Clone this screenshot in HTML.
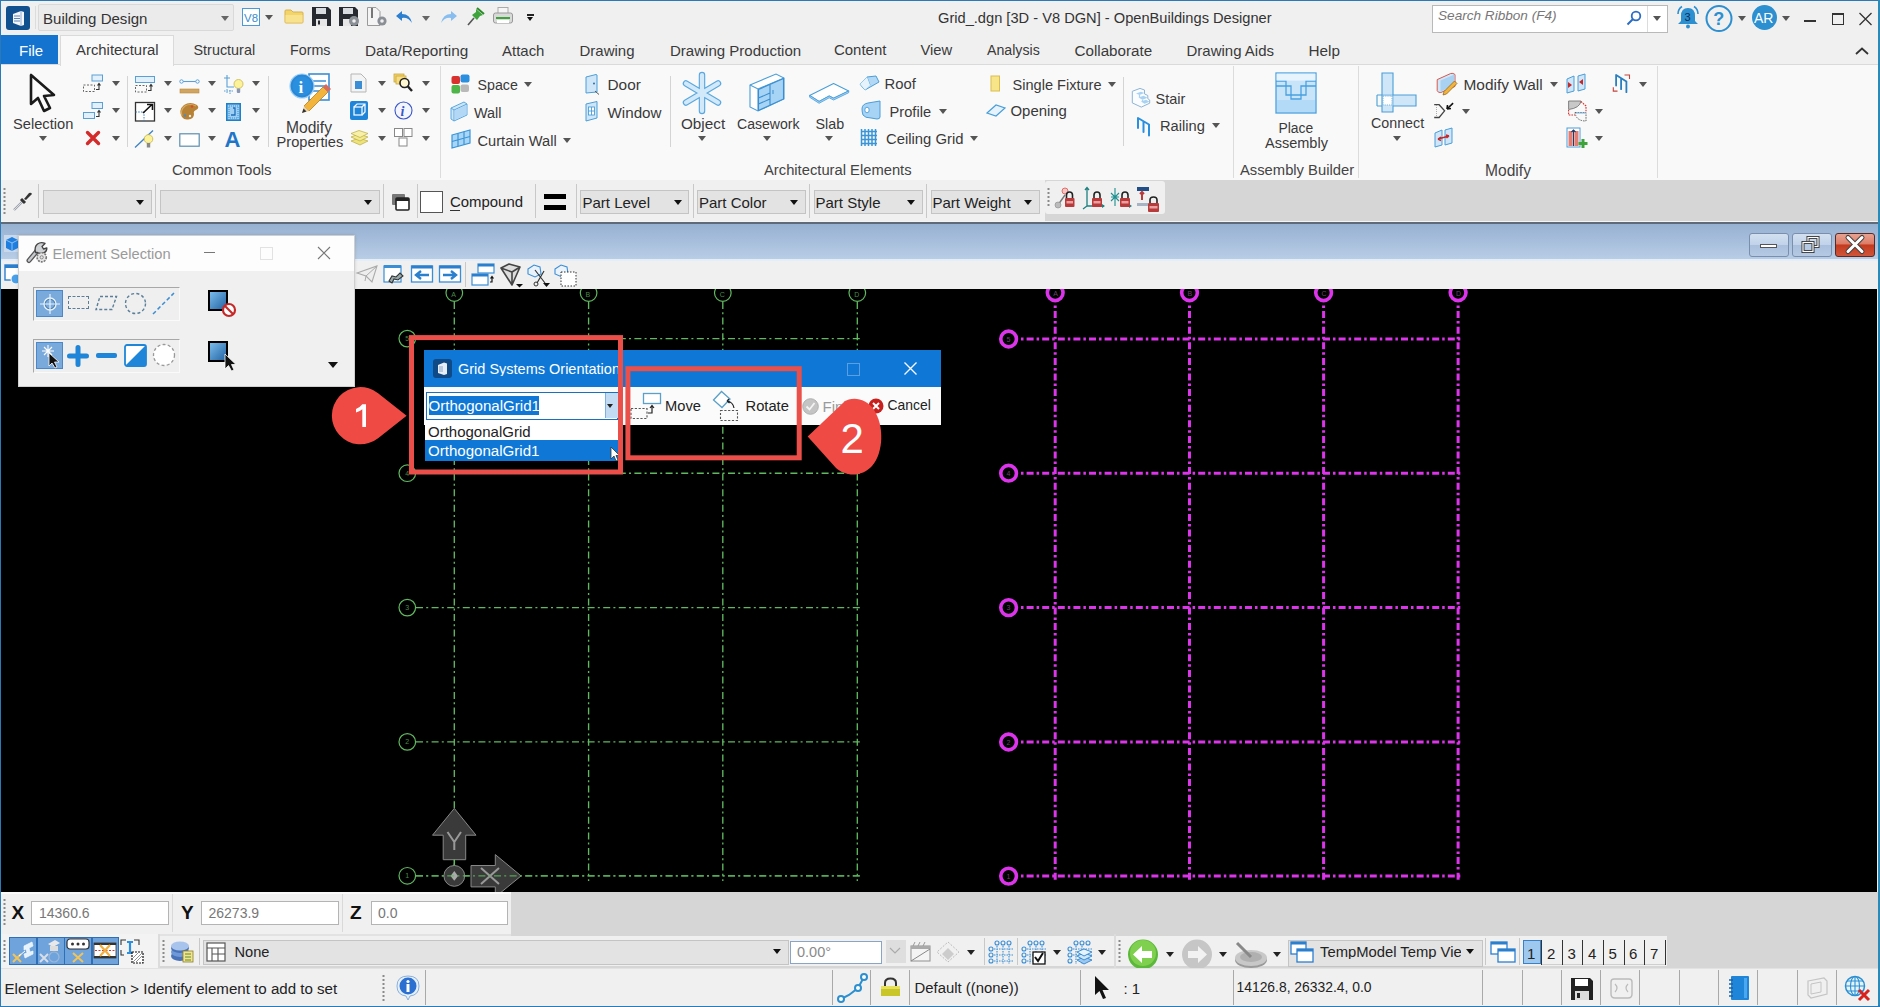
<!DOCTYPE html>
<html><head><meta charset="utf-8">
<style>
html,body{margin:0;padding:0;}
body{width:1880px;height:1007px;overflow:hidden;position:relative;background:#f0f0f0;font-family:"Liberation Sans",sans-serif;color:#333;}
.a{position:absolute;}
.t{position:absolute;white-space:nowrap;line-height:1;font-size:15px;color:#3a3a3a;}
.sep{position:absolute;width:1px;background:#d4d4d4;}
.arr{position:absolute;width:0;height:0;border-left:4px solid transparent;border-right:4px solid transparent;border-top:5px solid #555;}
.arrb{position:absolute;width:0;height:0;border-left:5px solid transparent;border-right:5px solid transparent;border-top:6px solid #111;}
svg{position:absolute;overflow:visible;}
</style></head>
<body>
<!-- window border -->
<div class="a" style="left:0;top:0;width:1880px;height:1px;background:#2b7ab8"></div>
<div class="a" style="left:0;top:0;width:1px;height:1007px;background:#2b7ab8"></div>
<div class="a" style="left:1878px;top:0;width:2px;height:1007px;background:#2b8ab8"></div>
<div class="a" style="left:0;top:1005px;width:1880px;height:2px;background:#2b7ab8"></div>

<!-- TITLE BAR -->
<div class="a" style="left:1px;top:1px;width:1877px;height:34px;background:#f0f0f0"></div>
<!-- app icon -->
<svg style="left:6px;top:6px" width="24" height="24" viewBox="0 0 24 24"><rect x="0" y="0" width="24" height="24" rx="3" fill="#11508f"/><path d="M7 8 L15 5 L18 6 L18 19 L15 20 L7 17 Z" fill="#f4f6fa"/><path d="M8 10h6M8 12.5h6M8 15h6" stroke="#5c86b6" stroke-width="1.2"/><path d="M15 5 L15 20" stroke="#8eaad0" stroke-width="1"/></svg>
<div class="a" style="left:35px;top:6px;width:1px;height:23px;background:#dcdcdc"></div>
<!-- combo -->
<div class="a" style="left:38px;top:4px;width:194px;height:25px;background:#ebebeb;border:1px solid #d9d9d9;border-radius:2px"></div>
<div class="t" style="left:43px;top:11px;color:#333;font-size:15.04px">Building Design</div>
<div class="arr" style="left:221px;top:16px;border-top-color:#666"></div>
<!-- v8 -->
<svg style="left:242px;top:8px" width="18" height="18" viewBox="0 0 18 18"><rect x="0.5" y="0.5" width="17" height="17" fill="#fff" stroke="#4a9ad8"/><text x="2" y="13.5" font-family="Liberation Sans" font-size="11.5" fill="#3b8bd0" textLength="14" lengthAdjust="spacingAndGlyphs">V8</text></svg>
<div class="arr" style="left:265px;top:15px"></div>
<!-- folder -->
<svg style="left:284px;top:9px" width="20" height="15" viewBox="0 0 20 15"><path d="M1 2 Q1 1 2 1 L7 1 L9 3 L18 3 Q19 3 19 4 L19 13 Q19 14 18 14 L2 14 Q1 14 1 13 Z" fill="#f3d46b" stroke="#d8b24a"/><rect x="1.5" y="6" width="17" height="7.5" fill="#f9e28e"/></svg>
<!-- save -->
<svg style="left:312px;top:7px" width="19" height="19" viewBox="0 0 19 19"><path d="M0 0 H16 L19 3 V19 H0 Z" fill="#262a30"/><rect x="4" y="1" width="10" height="6" fill="#d8dbe0"/><rect x="4" y="12" width="11" height="7" fill="#e6e6e6"/><rect x="6" y="13.5" width="2" height="4" fill="#262a30"/></svg>
<!-- save as -->
<svg style="left:339px;top:7px" width="21" height="19" viewBox="0 0 21 19"><path d="M0 0 H16 L19 3 V19 H0 Z" fill="#262a30"/><rect x="4" y="1" width="10" height="6" fill="#d8dbe0"/><rect x="4" y="12" width="8" height="7" fill="#e6e6e6"/><circle cx="15" cy="14" r="5" fill="#8a8f96"/><circle cx="15" cy="14" r="1.8" fill="#eee"/></svg>
<!-- doc gear -->
<svg style="left:367px;top:7px" width="20" height="19" viewBox="0 0 20 19"><path d="M0.5 0.5 H9 L13 4.5 V18.5 H0.5 Z" fill="#f4f4f4" stroke="#9a9a9a"/><rect x="4" y="1" width="2" height="10" fill="#777"/><circle cx="15" cy="14" r="4.6" fill="#8a8f96"/><circle cx="15" cy="14" r="1.8" fill="#eee"/></svg>
<!-- undo -->
<svg style="left:396px;top:11px" width="17" height="13" viewBox="0 0 17 13"><path d="M6 0 L0 5 L6 10 L6 7 Q12 6 16 12 Q14 3 6 3 Z" fill="#2c7fd1"/></svg>
<div class="arr" style="left:422px;top:16px;border-top-color:#666"></div>
<!-- redo -->
<svg style="left:440px;top:11px" width="17" height="13" viewBox="0 0 17 13"><path d="M11 0 L17 5 L11 10 L11 7 Q5 6 1 12 Q3 3 11 3 Z" fill="#88bdf0"/></svg>
<!-- pin -->
<svg style="left:467px;top:7px" width="18" height="19" viewBox="0 0 18 19"><path d="M9 2 L16 8 L13 9 L10 13 L5 8 L9 5 Z" fill="#3ea33a"/><path d="M10 1 L17 7" stroke="#2d8a2a" stroke-width="2"/><path d="M7 11 L1 18" stroke="#555" stroke-width="1.6"/></svg>
<!-- print -->
<svg style="left:493px;top:7px" width="20" height="18" viewBox="0 0 20 18"><rect x="5" y="0.5" width="10" height="7" fill="#f5f5f5" stroke="#aaa"/><rect x="0.5" y="6" width="19" height="10" rx="2" fill="#d9d9d9" stroke="#999"/><rect x="3" y="10" width="14" height="2" fill="#3ea33a"/><rect x="4" y="13" width="12" height="3" fill="#fff"/></svg>
<!-- customize -->
<div class="a" style="left:527px;top:14px;width:7px;height:1.5px;background:#222"></div>
<div class="arrb" style="left:527px;top:17px;border-left-width:3.5px;border-right-width:3.5px;border-top-width:4px"></div>
<!-- title -->
<div class="t" style="left:938px;top:11px;color:#333;font-size:14.65px">Grid_.dgn [3D - V8 DGN] - OpenBuildings Designer</div>
<!-- search -->
<div class="a" style="left:1432px;top:5px;width:234px;height:26px;background:#fff;border:1px solid #b9b9b9"></div>
<div class="a" style="left:1647px;top:6px;width:1px;height:26px;background:#dcdcdc"></div>
<div class="t" style="left:1438px;top:9px;font-style:italic;color:#777;font-size:13.6px">Search Ribbon (F4)</div>
<svg style="left:1626px;top:10px" width="16" height="16" viewBox="0 0 16 16"><circle cx="10" cy="6" r="4.3" fill="none" stroke="#2b6cc4" stroke-width="1.8"/><path d="M7 9 L1.5 14.5" stroke="#2b6cc4" stroke-width="2"/></svg>
<div class="arr" style="left:1653px;top:16px;border-top-color:#555"></div>
<!-- bell -->
<svg style="left:1675px;top:5px" width="26" height="24" viewBox="0 0 26 24"><path d="M13 3 Q6 3 6 11 L6 16 L3 19 L23 19 L20 16 L20 11 Q20 3 13 3 Z" fill="#2b8fd0"/><circle cx="13" cy="21.5" r="2" fill="#2b8fd0"/><path d="M3 9 Q3 4 7 1.5 M23 9 Q23 4 19 1.5" stroke="#2b8fd0" stroke-width="1.6" fill="none"/><text x="9.5" y="16" font-family="Liberation Sans" font-size="11" fill="#0c2d55">3</text></svg>
<!-- help -->
<svg style="left:1705px;top:5px" width="28" height="27" viewBox="0 0 28 27"><circle cx="14" cy="13.5" r="12.5" fill="none" stroke="#2b8fd0" stroke-width="2"/><text x="8.3" y="20" font-family="Liberation Sans" font-weight="bold" font-size="18" fill="#2b8fd0">?</text></svg>
<div class="arr" style="left:1738px;top:16px;border-top-color:#555"></div>
<!-- AR -->
<div class="a" style="left:1752px;top:5px;width:25px;height:25px;border-radius:50%;background:#2b8fd0"></div>
<div class="t" style="left:1754px;top:11px;color:#fff;font-size:14px">AR</div>
<div class="arr" style="left:1782px;top:16px;border-top-color:#555"></div>
<!-- window controls -->
<div class="a" style="left:1804px;top:20px;width:12px;height:2px;background:#333"></div>
<div class="a" style="left:1832px;top:13px;width:10px;height:9px;border:1px solid #333;border-top-width:2px"></div>
<svg style="left:1859px;top:13px" width="13" height="12" viewBox="0 0 13 12"><path d="M0.5 0 L12.5 12 M12.5 0 L0.5 12" stroke="#333" stroke-width="1.3"/></svg>


<!-- TABS -->
<div class="a" style="left:1px;top:35px;width:57px;height:29px;background:#1473cf"></div>
<div class="t" style="left:19px;top:43px;color:#fff;font-size:15px">File</div>
<div class="a" style="left:60px;top:35px;width:112px;height:30px;background:#f9f9f9;border:1px solid #dadada;border-bottom:none;z-index:2"></div>
<div class="t" style="left:76px;top:43px;z-index:3;font-size:14.88px">Architectural</div>
<div class="t" style="left:193.5px;top:43px;font-size:14.4px">Structural</div>
<div class="t" style="left:290px;top:43px;font-size:14.26px">Forms</div>
<div class="t" style="left:365px;top:43px;font-size:15.35px">Data/Reporting</div>
<div class="t" style="left:502px;top:43px;font-size:14.98px">Attach</div>
<div class="t" style="left:579.5px;top:43px">Drawing</div>
<div class="t" style="left:670px;top:43px;font-size:15.04px">Drawing Production</div>
<div class="t" style="left:834px;top:43px;font-size:14.96px">Content</div>
<div class="t" style="left:920.5px;top:43px;font-size:14.78px">View</div>
<div class="t" style="left:987px;top:43px;font-size:14.18px">Analysis</div>
<div class="t" style="left:1074.5px;top:43px;font-size:15.19px">Collaborate</div>
<div class="t" style="left:1186.5px;top:43px">Drawing Aids</div>
<div class="t" style="left:1308.5px;top:43px;font-size:15.31px">Help</div>
<svg style="left:1855px;top:47px" width="14" height="8" viewBox="0 0 14 8"><path d="M1 7 L7 1.5 L13 7" stroke="#333" stroke-width="1.8" fill="none"/></svg>


<!-- RIBBON -->
<div class="a" style="left:1px;top:64px;width:1877px;height:115px;background:#f9f9f9;border-top:1px solid #dadada;border-bottom:1px solid #dadada"></div>
<!-- ===== Common Tools ===== -->
<svg style="left:29px;top:73px" width="28" height="40" viewBox="0 0 28 40"><path d="M2 2 L2 31 L9 25 L15 38 L21 35 L15 23 L25 22 Z" fill="#fafafa" stroke="#1a1a1a" stroke-width="2.6" stroke-linejoin="round"/></svg>
<div class="t" style="left:13px;top:117.0px;font-size:14.66px">Selection</div>
<div class="arr" style="left:39px;top:136px"></div>
<!-- col A -->
<svg style="left:82px;top:74px" width="22" height="19" viewBox="0 0 22 19"><rect x="10" y="1" width="10.5" height="6" fill="#e2f0fb" stroke="#5aa0d6"/><rect x="1.5" y="11" width="11" height="6.5" fill="none" stroke="#666" stroke-dasharray="2 1.5"/><path d="M14 15.5 H17 V10 M15.5 11.5 L17 9.5 L18.5 11.5" stroke="#333" fill="none" stroke-width="1.1"/></svg>
<svg style="left:82px;top:101px" width="22" height="19" viewBox="0 0 22 19"><rect x="10" y="1.5" width="10.5" height="6" fill="#e2f0fb" stroke="#5aa0d6"/><rect x="1.5" y="11.5" width="11" height="6" fill="#e2f0fb" stroke="#5aa0d6"/><path d="M14 15.5 H17 V10 M15.5 11.5 L17 9.5 L18.5 11.5" stroke="#333" fill="none" stroke-width="1.1"/></svg>
<svg style="left:85px;top:130px" width="16" height="16" viewBox="0 0 16 16"><path d="M2.5 2.5 L13.5 13.5 M13.5 2.5 L2.5 13.5" stroke="#d42a2a" stroke-width="3.4" stroke-linecap="round"/></svg>
<div class="arr" style="left:111.5px;top:81px"></div>
<div class="arr" style="left:111.5px;top:108px"></div>
<div class="arr" style="left:111.5px;top:136px"></div>
<div class="sep" style="left:127px;top:76px;height:71px"></div>
<!-- col B -->
<svg style="left:134px;top:75px" width="22" height="19" viewBox="0 0 22 19"><rect x="1.5" y="1.5" width="19" height="6" fill="#e2f0fb" stroke="#5aa0d6"/><rect x="1.5" y="10.5" width="11" height="6.5" fill="none" stroke="#666" stroke-dasharray="2 1.5"/><path d="M14 15.5 H17 V10 M15.5 11.5 L17 9.5 L18.5 11.5" stroke="#333" fill="none" stroke-width="1.1"/></svg>
<svg style="left:134px;top:101px" width="22" height="21" viewBox="0 0 22 21"><rect x="1.5" y="1.5" width="19" height="18.5" fill="#fff" stroke="#333" stroke-width="1.3"/><path d="M1.5 11 H10 V20" stroke="#3b82c4" stroke-dasharray="1.5 1.2" fill="none"/><path d="M9 12 L18 3.5 M13 3.5 H18.5 V9" stroke="#111" stroke-width="1.6" fill="none"/></svg>
<svg style="left:134px;top:129px" width="22" height="20" viewBox="0 0 22 20"><path d="M1 18.5 L19 1.5" stroke="#3b82c4" stroke-width="1.3"/><circle cx="14.5" cy="10" r="4.3" fill="#fbf29a" stroke="#c9b54a" stroke-width="0.8"/><rect x="12.8" y="14" width="3.4" height="4.5" fill="#888"/></svg>
<div class="arr" style="left:163.5px;top:81px"></div>
<div class="arr" style="left:163.5px;top:108px"></div>
<div class="arr" style="left:163.5px;top:136px"></div>
<!-- col C -->
<svg style="left:179px;top:76px" width="21" height="18" viewBox="0 0 21 18"><path d="M2.5 5.5 H18.5" stroke="#5aa0d6" stroke-width="1.1"/><circle cx="2.5" cy="5.5" r="1.7" fill="#fff" stroke="#5aa0d6"/><circle cx="18.5" cy="5.5" r="1.7" fill="#fff" stroke="#5aa0d6"/><rect x="1" y="13" width="19" height="4" fill="#d2a55e" stroke="#b8883f" stroke-width="0.6"/></svg>
<svg style="left:179px;top:102px" width="21" height="19" viewBox="0 0 21 19"><path d="M3 15 Q-1 8 5 3 Q11 -1 18 3 Q21 6 17 8 Q14 9 15 12 Q15 17 9 17.5 Q5 18 3 15 Z" fill="#b78235"/><path d="M3 14 Q1 8 6 4 Q11 1 17 4" stroke="#d9a95c" stroke-width="1.2" fill="none"/><circle cx="13" cy="4.5" r="1.2" fill="#e04a2a"/><circle cx="11" cy="14" r="1.2" fill="#eee"/><circle cx="6" cy="13.5" r="1.2" fill="#4b8bc0"/></svg>
<svg style="left:179px;top:133px" width="21" height="14" viewBox="0 0 21 14"><rect x="0.8" y="0.8" width="19.4" height="12.4" fill="#fff" stroke="#5b8eaf" stroke-width="1.2"/></svg>
<div class="arr" style="left:207.5px;top:81px"></div>
<div class="arr" style="left:207.5px;top:108px"></div>
<div class="arr" style="left:207.5px;top:136px"></div>
<!-- col D -->
<svg style="left:223px;top:74px" width="21" height="21" viewBox="0 0 21 21"><path d="M4 1 V13 H11 M1 4 H7" stroke="#5aa0d6" stroke-width="1.1" fill="none"/><path d="M4 15 V20 M7 16 V20 M1 17 H11" stroke="#5aa0d6" stroke-width="1" stroke-dasharray="1.5 1" fill="none"/><circle cx="15.5" cy="10" r="4.5" fill="#fbf29a" stroke="#c9b54a" stroke-width="0.8"/><rect x="13.8" y="14.5" width="3.4" height="4.5" rx="1" fill="#8a96b8"/></svg>
<svg style="left:226px;top:103px" width="15" height="18" viewBox="0 0 15 18"><rect x="0.8" y="0.8" width="13.4" height="16.4" fill="#9fd0f4" stroke="#1f7fc9" stroke-width="1.6"/><rect x="3" y="3" width="9" height="12" fill="none" stroke="#3a8fd3" stroke-dasharray="1 1"/><path d="M5 12 H9 V5 H7" stroke="#1f6fb9" stroke-width="1.3" fill="none"/></svg>
<div class="t" style="left:224.5px;top:129px;font-size:22px;font-weight:bold;color:#1f76c8">A</div>
<div class="arr" style="left:251.5px;top:81px"></div>
<div class="arr" style="left:251.5px;top:108px"></div>
<div class="arr" style="left:251.5px;top:136px"></div>
<div class="sep" style="left:268px;top:76px;height:71px"></div>
<!-- Modify properties -->
<svg style="left:289px;top:72px" width="42" height="42" viewBox="0 0 42 42"><rect x="20" y="2" width="20" height="26" fill="#fff" stroke="#3a8ed6" stroke-width="1.6"/><path d="M24 9 H37 M24 14 H37 M24 19 H37" stroke="#3a8ed6" stroke-width="1.5"/><circle cx="13" cy="14" r="12" fill="#2a87d6" stroke="#9ccff5" stroke-width="1.2"/><circle cx="13" cy="14" r="9.5" fill="#2b8fe0"/><text x="9.5" y="21" font-family="Liberation Serif" font-weight="bold" font-size="17" fill="#fff">i</text><path d="M15 34 L34 15 L39 20 L20 39 Z" fill="#f2b43a" stroke="#b77d1d" stroke-width="0.8"/><path d="M15 34 L13 41 L20 39 Z" fill="#e9d4a8"/><path d="M13 41 L14.5 36.5 L17.5 39.5 Z" fill="#333"/><path d="M34 15 L37 12 L42 17 L39 20 Z" fill="#d96b5d"/></svg>
<div class="t" style="left:286px;top:119.5px;font-size:15.6px">Modify</div>
<div class="t" style="left:276.5px;top:135px;font-size:14.66px">Properties</div>
<svg style="left:350px;top:73px" width="18" height="20" viewBox="0 0 18 20"><path d="M1 1 H11 L16 6 V19 H1 Z" fill="#f4f4f4" stroke="#b5b5b5"/><rect x="5" y="8" width="7" height="8" fill="#3a8ed6"/></svg>
<svg style="left:350px;top:101px" width="18" height="19" viewBox="0 0 18 19"><rect x="0" y="0" width="18" height="19" rx="2" fill="#1f85d8"/><rect x="4" y="6" width="8" height="8" fill="none" stroke="#fff" stroke-width="1.2"/><path d="M4 6 L7 3 H15 V11 L12 14 M12 6 L15 3" stroke="#fff" fill="none" stroke-width="1.2"/></svg>
<svg style="left:350px;top:130px" width="19" height="16" viewBox="0 0 19 16"><path d="M1 11 L9 8 L18 11 L10 15 Z" fill="#eee27a" stroke="#b9ab3c" stroke-width="0.7"/><path d="M1 7 L9 4 L18 7 L10 11 Z" fill="#f3e98e" stroke="#b9ab3c" stroke-width="0.7"/><path d="M1 3.5 L9 0.5 L18 3.5 L10 7.5 Z" fill="#f8f0a8" stroke="#b9ab3c" stroke-width="0.7"/></svg>
<div class="arr" style="left:377.5px;top:81px"></div>
<div class="arr" style="left:377.5px;top:108px"></div>
<div class="arr" style="left:377.5px;top:136px"></div>
<svg style="left:393px;top:73px" width="21" height="20" viewBox="0 0 21 20"><rect x="1" y="1" width="10" height="8" fill="#f3d46b" stroke="#c9a640" stroke-width="0.8"/><rect x="3" y="3" width="10" height="8" fill="#f7dd80" stroke="#c9a640" stroke-width="0.8"/><circle cx="11.5" cy="10" r="4.5" fill="#fff8d0" stroke="#222" stroke-width="1.6"/><path d="M14.5 13 L19 18" stroke="#222" stroke-width="2.4"/></svg>
<svg style="left:394px;top:101px" width="19" height="19" viewBox="0 0 19 19"><circle cx="9.5" cy="9.5" r="8.5" fill="#f4f6ff" stroke="#3a56c8" stroke-width="1.1"/><text x="6.5" y="15" font-family="Liberation Serif" font-style="italic" font-weight="bold" font-size="14" fill="#3a56c8">i</text></svg>
<svg style="left:394px;top:128px" width="19" height="19" viewBox="0 0 19 19"><rect x="0.5" y="0.5" width="8" height="8" fill="#fff" stroke="#888"/><rect x="10" y="0.5" width="8" height="8" fill="#fff" stroke="#888"/><rect x="5" y="10" width="8" height="8" fill="#fff" stroke="#888"/></svg>
<div class="arr" style="left:422px;top:81px"></div>
<div class="arr" style="left:422px;top:108px"></div>
<div class="arr" style="left:422px;top:136px"></div>
<div class="sep" style="left:439.5px;top:66px;height:112px;background:#dcdcdc"></div>
<div class="t" style="left:172px;top:163.0px;color:#444;font-size:14.97px">Common Tools</div>
<!-- ===== Architectural Elements ===== -->
<svg style="left:451px;top:74px" width="19" height="20" viewBox="0 0 19 20"><rect x="0.5" y="2" width="8.5" height="8" rx="2" fill="#d9322e"/><rect x="9.5" y="0.5" width="9" height="8" rx="2" fill="#2b8fe0"/><rect x="0.5" y="11" width="8.5" height="8.5" rx="2" fill="#4eb548"/><rect x="9.5" y="10.5" width="8.5" height="7.5" rx="2" fill="#b9b9b9"/></svg>
<div class="t" style="left:477.5px;top:77.5px;font-size:14.23px">Space</div>
<div class="arr" style="left:524px;top:82px"></div>
<svg style="left:450px;top:101px" width="18" height="21" viewBox="0 0 18 21"><path d="M1 7 L14 1 L17 3 L17 14 L4 20 L1 18 Z" fill="#cfe6f8" stroke="#5aa8e0" stroke-width="1"/><path d="M1 7 L4 9 L17 3 M4 9 V20" stroke="#5aa8e0" fill="none" stroke-width="1"/><path d="M4.5 9.5 L16.5 4 V13.5 L4.5 19 Z" fill="#b3d8f5"/></svg>
<div class="t" style="left:474px;top:106.0px;font-size:14.45px">Wall</div>
<svg style="left:451px;top:129px" width="20" height="20" viewBox="0 0 20 20"><path d="M1 6 L19 1 V14 L1 19 Z" fill="#a9d5f6" stroke="#3a95d8" stroke-width="1.2"/><path d="M7 4.3 V17.3 M13 2.7 V15.7 M1 12.5 L19 7.5" stroke="#3a95d8" stroke-width="1.2"/></svg>
<div class="t" style="left:477.5px;top:133.5px;font-size:14.65px">Curtain Wall</div>
<div class="arr" style="left:563px;top:138px"></div>
<svg style="left:585px;top:74px" width="16" height="21" viewBox="0 0 16 21"><path d="M1 3 L11 0.5 L12 1 V18 L1 19 Z" fill="#cfe6f8" stroke="#4a9ed8" stroke-width="1"/><circle cx="9" cy="9.5" r="0.9" fill="#1f5f99"/><path d="M10 17 L14 20.5" stroke="#555" stroke-width="1"/></svg>
<div class="t" style="left:607.5px;top:76.5px;font-size:15.4px">Door</div>
<svg style="left:585px;top:101px" width="14" height="21" viewBox="0 0 14 21"><path d="M1 3 L12 0.5 V17 L1 20 Z" fill="#cfe6f8" stroke="#4a9ed8" stroke-width="1"/><rect x="3.5" y="6" width="6" height="8" fill="#fff" stroke="#4a9ed8" stroke-width="0.9"/><path d="M6.5 6 V14 M3.5 10 H9.5" stroke="#4a9ed8" stroke-width="0.9"/></svg>
<div class="t" style="left:607.5px;top:105px;font-size:15.19px">Window</div>
<div class="sep" style="left:669.5px;top:76px;height:71px"></div>
<svg style="left:682px;top:72px" width="40" height="42" viewBox="0 0 40 42"><g stroke="#5aa8e0" stroke-width="6.5" stroke-linecap="round"><path d="M20 3 V39 M4 11.5 L36 30.5 M4 30.5 L36 11.5"/></g><g stroke="#d2e9fa" stroke-width="4.2" stroke-linecap="round"><path d="M20 3 V39 M4 11.5 L36 30.5 M4 30.5 L36 11.5"/></g></svg>
<div class="t" style="left:681px;top:116px;font-size:15.27px">Object</div>
<div class="arr" style="left:697.5px;top:136px"></div>
<svg style="left:749px;top:73px" width="37" height="40" viewBox="0 0 37 40"><path d="M1 12 L27 1 L35 5 L35 26 L9 38 L1 34 Z" fill="#fff" stroke="#4a9ed8" stroke-width="1.1"/><path d="M1 12 L9 16 L35 5 M9 16 V38" stroke="#4a9ed8" fill="none" stroke-width="1.1"/><path d="M9.5 16.5 L34.5 5.5 V26 L9.5 37.5 Z" fill="#a7d3f4"/><path d="M21 11 V32 M9.5 25 L21 20 M9.5 31 L21 26 M9.5 16.5 L34.5 5.5 V26 L9.5 37.5 Z" stroke="#3a8ed0" fill="none" stroke-width="1.1"/><path d="M24 17 V21" stroke="#3a8ed0" stroke-width="1"/></svg>
<div class="t" style="left:737px;top:117.0px;font-size:14.09px">Casework</div>
<div class="arr" style="left:763px;top:136px"></div>
<svg style="left:808px;top:82px" width="42" height="22" viewBox="808 82 42 22"><path d="M809.6 95.4 L833.6 83.6 L848.7 90.9 L833.6 98.2 L829.2 96 L819.1 101.5 Z" fill="#fff" stroke="#4a9ed8" stroke-width="1.1" stroke-linejoin="round"/><path d="M809.6 95.4 V97.2 L819.1 103.3 L829.2 97.8 L833.6 100 L848.7 92.7 V90.9 L833.6 98.2 L829.2 96 L819.1 101.5 Z" fill="#a7d3f4" stroke="#4a9ed8" stroke-width="0.8" stroke-linejoin="round"/></svg>
<div class="t" style="left:815.5px;top:117.0px;font-size:14.34px">Slab</div>
<div class="arr" style="left:825px;top:136px"></div>
<svg style="left:859px;top:75px" width="21" height="17" viewBox="0 0 21 17"><path d="M1 9 L8 2 L17 1 L20 7 L6 15 Z" fill="#b3d8f5" stroke="#4a9ed8" stroke-width="1"/><path d="M8 2 L11 10 M1 9 L6 15" stroke="#4a9ed8" stroke-width="0.8" fill="none"/><path d="M1 9 L8 2 L11 10 L6 15 Z" fill="#e6f3fc"/></svg>
<div class="t" style="left:884.5px;top:76.5px;font-size:14.82px">Roof</div>
<svg style="left:861px;top:100px" width="21" height="20" viewBox="0 0 21 20"><path d="M1 9 Q1 4 7 3 L19 1 V17 Q19 19 16 19 L10 18 Q4 18 2 15 Q1 12 1 9 Z" fill="#a7d3f4" stroke="#4a9ed8" stroke-width="1"/><ellipse cx="6" cy="10" rx="2.2" ry="2.8" fill="#fff" stroke="#4a9ed8" stroke-width="0.9"/></svg>
<div class="t" style="left:889.5px;top:105.0px;font-size:14.66px">Profile</div>
<div class="arr" style="left:939px;top:109px"></div>
<svg style="left:860px;top:128px" width="18" height="19" viewBox="0 0 18 19"><path d="M1.5 1 V18 M5 1 V18 M8.5 1 V18 M12 1 V18 M15.5 1 V18 M1 3.5 H17 M1 7.5 H17 M1 11.5 H17 M1 15.5 H17" stroke="#3a95d8" stroke-width="1.5"/></svg>
<div class="t" style="left:886px;top:131.5px;font-size:14.84px">Ceiling Grid</div>
<div class="arr" style="left:970px;top:136px"></div>
<svg style="left:990px;top:75px" width="11" height="17" viewBox="0 0 11 17"><rect x="1" y="1" width="8.5" height="15" fill="#f8e58a" stroke="#d9be4e" stroke-width="1"/></svg>
<div class="t" style="left:1012.5px;top:77.5px;font-size:14.57px">Single Fixture</div>
<div class="arr" style="left:1107.5px;top:82px"></div>
<svg style="left:986px;top:104px" width="20" height="13" viewBox="0 0 20 13"><path d="M1 9 L10 1 L19 4 L10 12 Z" fill="#e6f3fc" stroke="#4a9ed8" stroke-width="1.2"/></svg>
<div class="t" style="left:1010.5px;top:103.5px;font-size:14.93px">Opening</div>
<div class="sep" style="left:1122.5px;top:77px;height:69px"></div>
<svg style="left:1130px;top:86px" width="22" height="24" viewBox="1130 86 22 24"><path d="M1132.3 91.3 L1140 88.4 L1144.5 90 V93.9 L1147.8 95.5 V98.7 L1149.7 100 V103.2 L1141.3 107.1 L1132.3 102.9 Z" fill="#fafcff" stroke="#8fb4d4" stroke-width="1"/><path d="M1136 93.5 L1141 91.8 L1144.3 93 L1139.5 95 Z M1138.5 97.5 L1143.5 95.8 L1147.6 97.8 L1142.5 99.8 Z M1141 101.6 L1146 99.8 L1149.5 101.8 L1144.5 103.8 Z" fill="#a9d2f2"/><path d="M1139.5 95 V97.6 M1142.5 99.8 V102" stroke="#a9d2f2" stroke-width="1.2"/></svg>
<div class="t" style="left:1155.5px;top:92.0px;font-size:14.51px">Stair</div>
<svg style="left:1134px;top:115px" width="18" height="22" viewBox="0 0 18 22"><path d="M4 13 V3 L15 9.5 V20.5 M9.5 6.2 V17" stroke="#2b8fe0" stroke-width="2" fill="none" stroke-linejoin="round" stroke-linecap="round"/></svg>
<div class="t" style="left:1160px;top:118.5px;font-size:14.67px">Railing</div>
<div class="arr" style="left:1212px;top:123px"></div>
<div class="sep" style="left:1232.5px;top:66px;height:112px;background:#dcdcdc"></div>
<div class="t" style="left:764px;top:163.0px;color:#444;font-size:14.76px">Architectural Elements</div>
<!-- ===== Assembly builder ===== -->
<svg style="left:1275px;top:72px" width="42" height="42" viewBox="0 0 42 42"><rect x="1" y="1" width="40" height="40" fill="#c7e4f9" stroke="#4aa0e0" stroke-width="1.3"/><path d="M1 9 H11 V23 H31 V9 H41" stroke="#4aa0e0" stroke-width="1.3" fill="none"/><path d="M1 14 H16 V27 H26 V14 H41" stroke="#4aa0e0" stroke-width="1.3" fill="none"/><rect x="1.6" y="1.6" width="38.8" height="7" fill="#e8f4fd"/><path d="M2 28 H40 V40 H2 Z" fill="#9fd0f4" opacity="0.5"/></svg>
<div class="t" style="left:1278.5px;top:121.5px;font-size:13.92px">Place</div>
<div class="t" style="left:1265px;top:135.5px;font-size:14.53px">Assembly</div>
<div class="t" style="left:1240px;top:163.0px;color:#444;font-size:14.78px">Assembly Builder</div>
<div class="sep" style="left:1358px;top:66px;height:112px;background:#dcdcdc"></div>
<!-- ===== Modify ===== -->
<svg style="left:1376px;top:72px" width="42" height="41" viewBox="0 0 42 41"><path d="M6 1 H17 V23 H40 V34 H17 V40 H6 Z" fill="#cfe6f8" stroke="#4a9ed8" stroke-width="1.1"/><path d="M6 23 H17 V34" stroke="#4a9ed8" stroke-width="0.6" fill="none"/><path d="M1 23 H6 M1 34 H6 M1 23 V34" stroke="#4a9ed8" stroke-width="1.1" fill="none"/><rect x="7" y="24" width="9" height="9" fill="#fff" stroke="#7ab3e0" stroke-dasharray="1.2 1"/></svg>
<div class="t" style="left:1371px;top:116px;font-size:14.27px">Connect</div>
<div class="arr" style="left:1392.5px;top:136px"></div>
<svg style="left:1430px;top:70px" width="30" height="26" viewBox="1430 70 30 26"><path d="M1437.2 79.6 L1450.7 73.5 Q1453 72.8 1455 74.5 L1455 86.4 L1440.9 92.5 Q1438 93 1437.2 90.6 Z" fill="#cfe6f8" stroke="#d9574e" stroke-width="1"/><path d="M1440.5 80.5 L1454.5 74.5 V85.5 L1440.5 91.5 Z" fill="#a9d2f2"/><path d="M1444 91.5 L1454.5 81 L1457 83.5 L1446.5 94 L1443 95 Z" fill="#f2b43a" stroke="#8a5a12" stroke-width="0.7"/></svg>
<div class="t" style="left:1463.5px;top:76.5px;font-size:15.43px">Modify Wall</div>
<div class="arr" style="left:1549.5px;top:82px"></div>
<svg style="left:1430px;top:100px" width="26" height="20" viewBox="1430 100 26 20"><path d="M1434.2 104.7 H1439.1 L1444.6 110.8 L1439.1 117.5 H1434.2" stroke="#444" stroke-width="1.3" fill="none"/><path d="M1436.5 105 V117" stroke="#999" stroke-width="0.8" stroke-dasharray="1 1"/><path d="M1453.1 103.2 L1447 109 M1447 109 L1447.5 105 M1447 109 L1451 108.5" stroke="#111" stroke-width="1.6" fill="none"/></svg>
<div class="arr" style="left:1462px;top:109px"></div>
<svg style="left:1434px;top:127px" width="20" height="21" viewBox="0 0 20 21"><path d="M1 6 L8 3 V18 L1 20 Z" fill="#cfe6f8" stroke="#4a9ed8"/><path d="M11 3 L18 1 V16 L11 18 Z" fill="#cfe6f8" stroke="#4a9ed8"/><path d="M4 12 L15 9 M4 12 L7 10 M4 12 L7 13.5 M15 9 L12 8 M15 9 L12.5 11" stroke="#c62828" stroke-width="1.4" fill="none"/></svg>
<svg style="left:1566px;top:73px" width="21" height="21" viewBox="0 0 21 21"><path d="M1 6 L8 3 V18 L1 20 Z" fill="#cfe6f8" stroke="#4a9ed8"/><path d="M12 3 L19 1 V16 L12 18 Z" fill="#cfe6f8" stroke="#4a9ed8"/><path d="M2 9 L6 12 L2 15 Z" fill="#c62828"/><path d="M17 6 L13 9 L17 12 Z" fill="#c62828"/></svg>
<svg style="left:1566px;top:99px" width="24" height="26" viewBox="1566 99 24 26"><path d="M1568.6 101 H1581 Q1580 108 1568.6 109.5 Z" fill="#c8c8c8" stroke="#777" stroke-width="0.9"/><path d="M1581 101.5 L1586 106 V112 M1568.6 110 V115 H1575" stroke="#d9322e" stroke-width="1.1" stroke-dasharray="1.6 1" fill="none"/><path d="M1575 112.5 H1586 V121 Q1576 121 1575 112.5 Z" fill="none" stroke="#666" stroke-width="1" stroke-dasharray="1.6 1"/><path d="M1576 113 H1585.5" stroke="#7ab3e0" stroke-width="1"/></svg>
<div class="arr" style="left:1595px;top:109px"></div>
<svg style="left:1566px;top:127px" width="22" height="22" viewBox="0 0 22 22"><rect x="1" y="1" width="13" height="19" fill="#fff" stroke="#4a9ed8"/><rect x="2.5" y="4" width="4" height="15" fill="#e57c72"/><rect x="8.5" y="4" width="4" height="15" fill="#e57c72"/><path d="M7.5 19 V3 M5.5 5 L7.5 3 L9.5 5" stroke="#1f3a66" stroke-width="1.2" fill="none"/><path d="M17 12 V21 M12.5 16.5 H21.5" stroke="#3ea33a" stroke-width="3"/></svg>
<div class="arr" style="left:1595px;top:136px"></div>
<svg style="left:1610px;top:72px" width="22" height="22" viewBox="1610 72 22 22"><path d="M1616.1 85.6 V75 L1626.4 81.4 V92.2 M1621.1 78.9 V89.2" stroke="#2b7fbf" stroke-width="1.8" fill="none" stroke-linejoin="round" stroke-linecap="round"/><path d="M1624.5 75 H1629.5 V78.9 M1613.3 87.2 V91.1 H1617.5" stroke="#c4433a" stroke-width="1.1" fill="none"/></svg>
<div class="arr" style="left:1639px;top:82px"></div>
<div class="t" style="left:1485px;top:163.0px;color:#444;font-size:15.6px">Modify</div>
<div class="sep" style="left:1656.5px;top:66px;height:112px;background:#dcdcdc"></div>


<!-- TOOLBAR -->
<div class="a" style="left:1px;top:180px;width:1877px;height:42px;background:#d6d6d6"></div>
<div class="a" style="left:1px;top:180px;width:1044px;height:42px;background:#f0f0f0"></div>
<div class="a" style="left:1045px;top:181px;width:120px;height:33px;background:#f0f0f0;border-radius:3px"></div>
<div class="a" style="left:1px;top:221px;width:1877px;height:1px;background:#f4f4f4"></div>
<div class="a" style="left:1px;top:222px;width:1877px;height:2px;background:#5f6b78"></div>
<svg style="left:3px;top:188px" width="3" height="26" viewBox="0 0 3 26"><path d="M1.5 0 V26" stroke="#8a8a8a" stroke-width="2" stroke-dasharray="2 2"/></svg>
<svg style="left:12px;top:190px" width="21" height="22" viewBox="0 0 21 22"><path d="M2 20 L11 11" stroke="#9da3ad" stroke-width="2.4"/><path d="M2 20 L11 11" stroke="#e8eaee" stroke-width="0.8"/><path d="M9 9 L13 13" stroke="#333" stroke-width="3"/><path d="M12 9 L17 3 Q19 2 20 4 L14 10 Z" fill="#333"/></svg>
<div class="sep" style="left:38px;top:184px;height:34px;background:#c8c8c8"></div>
<div class="a" style="left:43px;top:190px;width:107px;height:22px;background:#e3e3e3;border:1px solid #c4c4c4"></div>
<div class="arrb" style="left:136px;top:199.5px;border-left-width:4.5px;border-right-width:4.5px;border-top-width:5.5px"></div>
<div class="sep" style="left:155px;top:184px;height:34px;background:#c8c8c8"></div>
<div class="a" style="left:160px;top:190px;width:218px;height:22px;background:#e3e3e3;border:1px solid #c4c4c4"></div>
<div class="arrb" style="left:364px;top:199.5px;border-left-width:4.5px;border-right-width:4.5px;border-top-width:5.5px"></div>
<div class="sep" style="left:383px;top:184px;height:34px;background:#c8c8c8"></div>
<svg style="left:391px;top:193px" width="19" height="18" viewBox="0 0 19 18"><rect x="1" y="1" width="13" height="11" rx="1" fill="#777"/><rect x="5" y="5" width="13" height="12" rx="1" fill="#fff" stroke="#222" stroke-width="1.6"/><rect x="5" y="5" width="13" height="3" fill="#222"/></svg>
<div class="sep" style="left:416.5px;top:184px;height:34px;background:#c8c8c8"></div>
<div class="a" style="left:420px;top:191px;width:21px;height:20px;background:#fff;border:1.5px solid #555"></div>
<div class="t" style="left:450px;top:194.5px;color:#222;font-size:14.93px">Compound</div>
<div class="a" style="left:450px;top:209.5px;width:10px;height:1px;background:#333"></div>
<div class="sep" style="left:534.5px;top:184px;height:34px;background:#c8c8c8"></div>
<div class="a" style="left:544px;top:194px;width:22px;height:4.5px;background:#000"></div>
<div class="a" style="left:544px;top:205px;width:22px;height:4.5px;background:#000"></div>
<div class="sep" style="left:575.5px;top:184px;height:34px;background:#c8c8c8"></div>
<div class="a" style="left:580px;top:190px;width:107px;height:22px;background:#e3e3e3;border:1px solid #c4c4c4"></div>
<div class="t" style="left:582.5px;top:194.5px;color:#222">Part Level</div>
<div class="arrb" style="left:673.5px;top:199.5px;border-left-width:4.5px;border-right-width:4.5px;border-top-width:5.5px"></div>
<div class="sep" style="left:692.5px;top:184px;height:34px;background:#c8c8c8"></div>
<div class="a" style="left:697px;top:190px;width:107px;height:22px;background:#e3e3e3;border:1px solid #c4c4c4"></div>
<div class="t" style="left:699px;top:194.5px;color:#222">Part Color</div>
<div class="arrb" style="left:789.5px;top:199.5px;border-left-width:4.5px;border-right-width:4.5px;border-top-width:5.5px"></div>
<div class="sep" style="left:809px;top:184px;height:34px;background:#c8c8c8"></div>
<div class="a" style="left:813.5px;top:190px;width:107px;height:22px;background:#e3e3e3;border:1px solid #c4c4c4"></div>
<div class="t" style="left:815.5px;top:194.5px;color:#222">Part Style</div>
<div class="arrb" style="left:906.5px;top:199.5px;border-left-width:4.5px;border-right-width:4.5px;border-top-width:5.5px"></div>
<div class="sep" style="left:926px;top:184px;height:34px;background:#c8c8c8"></div>
<div class="a" style="left:930.5px;top:190px;width:107px;height:22px;background:#e3e3e3;border:1px solid #c4c4c4"></div>
<div class="t" style="left:932.5px;top:194.5px;color:#222">Part Weight</div>
<div class="arrb" style="left:1023.5px;top:199.5px;border-left-width:4.5px;border-right-width:4.5px;border-top-width:5.5px"></div>
<!-- lock group -->
<svg style="left:1047px;top:188px" width="3" height="20" viewBox="0 0 3 20"><path d="M1.5 0 V20" stroke="#8a8a8a" stroke-width="2" stroke-dasharray="2 2"/></svg>
<svg style="left:1054px;top:186px" width="24" height="24" viewBox="0 0 24 24"><path d="M4 19 L11 9" stroke="#777" stroke-width="1.4"/><circle cx="4" cy="19" r="3" fill="#bbb" stroke="#888" stroke-width="0.6"/><circle cx="11" cy="5" r="3" fill="#f3c6c6" stroke="#d9574e" stroke-width="0.8"/><path d="M12.5 12 V9 Q12.5 6 15.5 6 Q18.5 6 18.5 9 V12" stroke="#222" stroke-width="1.6" fill="none"/><rect x="11" y="12" width="9.5" height="9" rx="1" fill="#b83a3a"/><rect x="12.5" y="15" width="6.5" height="2.5" fill="#e9a0a0"/></svg>
<svg style="left:1082px;top:186px" width="24" height="24" viewBox="0 0 24 24"><path d="M5 2 V20 L1 23 M5 20 H22 M3 4 L5 1.5 L7 4" stroke="#1f8080" stroke-width="1.3" fill="none"/><path d="M20 18 L23 20 L20 22 Z" fill="#1f8080"/><path d="M12 12 V9 Q12 6 15 6 Q18 6 18 9 V12" stroke="#222" stroke-width="1.6" fill="none"/><rect x="10" y="12" width="10" height="9" rx="1" fill="#b83a3a"/><rect x="11.5" y="15" width="7" height="2.5" fill="#e9a0a0"/></svg>
<svg style="left:1110px;top:186px" width="24" height="24" viewBox="0 0 24 24"><path d="M5 2 V20 M1 7 L9 15 M9 7 L1 15 M1 11 H9" stroke="#1f9090" stroke-width="1.1" fill="none"/><path d="M19 18 L22 20 L19 22 Z" fill="#1f8080"/><path d="M12 12 V9 Q12 6 15 6 Q18 6 18 9 V12" stroke="#222" stroke-width="1.6" fill="none"/><rect x="10" y="12" width="10" height="9" rx="1" fill="#b83a3a"/><rect x="11.5" y="15" width="7" height="2.5" fill="#e9a0a0"/></svg>
<svg style="left:1136px;top:186px" width="26" height="26" viewBox="0 0 26 26"><rect x="1" y="1" width="12" height="4" fill="#1f4f86"/><path d="M6 6 V14 M4 8 L6 6 L8 8" stroke="#b83a3a" stroke-width="2" fill="none"/><rect x="1" y="17" width="11" height="3" fill="#a8b4c4"/><path d="M14 17 V14 Q14 11 17.5 11 Q21 11 21 14 V17" stroke="#222" stroke-width="1.6" fill="none"/><rect x="12" y="17" width="11" height="9" rx="1" fill="#b83a3a"/><rect x="13.5" y="20" width="8" height="2.5" fill="#e9a0a0"/></svg>


<!-- VIEW WINDOW -->
<div class="a" style="left:1px;top:224px;width:1877px;height:35px;background:linear-gradient(#97b1d2,#b8cde6)"></div>
<div class="a" style="left:1px;top:258.5px;width:1877px;height:2px;background:#e4edf8"></div>
<div class="a" style="left:1px;top:260.5px;width:1877px;height:28.5px;background:#f0f0f0"></div>
<!-- view window controls -->
<div class="a" style="left:1749px;top:233px;width:38px;height:22px;border:1px solid #7a8fae;border-radius:3px;background:linear-gradient(#d3e0f0 0%,#c1d3ea 48%,#a9bfdc 50%,#b5c9e3 100%)"></div>
<div class="a" style="left:1760px;top:244px;width:17px;height:4px;background:#fff;border:1px solid #555;box-sizing:border-box"></div>
<div class="a" style="left:1792px;top:233px;width:38px;height:22px;border:1px solid #7a8fae;border-radius:3px;background:linear-gradient(#d3e0f0 0%,#c1d3ea 48%,#a9bfdc 50%,#b5c9e3 100%)"></div>
<svg style="left:1801px;top:236px" width="20" height="17" viewBox="0 0 20 17"><rect x="7" y="1.5" width="10" height="9" fill="none" stroke="#333" stroke-width="3"/><rect x="7" y="1.5" width="10" height="9" fill="none" stroke="#fff" stroke-width="1.2"/><rect x="2" y="6.5" width="10" height="9" fill="#b5c9e3" stroke="#333" stroke-width="3"/><rect x="2" y="6.5" width="10" height="9" fill="none" stroke="#fff" stroke-width="1.2"/></svg>
<div class="a" style="left:1835px;top:233px;width:38px;height:22px;border:1px solid #5c2a22;border-radius:3px;background:linear-gradient(#e8a290 0%,#dc7c68 45%,#c43a1e 50%,#d0553a 100%)"></div>
<svg style="left:1845px;top:235px" width="20" height="19" viewBox="0 0 20 19"><path d="M3 2.5 L17 16.5 M17 2.5 L3 16.5" stroke="#444" stroke-width="5" stroke-linecap="round"/><path d="M3 2.5 L17 16.5 M17 2.5 L3 16.5" stroke="#fff" stroke-width="3" stroke-linecap="round"/></svg>
<!-- left icons behind dialog -->
<svg style="left:4px;top:235px" width="16" height="17" viewBox="0 0 16 17"><rect x="0" y="0" width="16" height="17" fill="#c9d8ea"/><path d="M2 5 L8 2 L14 5 V13 L8 16 L2 13 Z" fill="#1f7fe0"/><path d="M8 8 V16 M2 5 L8 8 L14 5" stroke="#8bc0f0" stroke-width="1" fill="none"/></svg>
<svg style="left:4px;top:264px" width="16" height="21" viewBox="0 0 16 21"><rect x="1" y="1" width="15" height="15" fill="#fff" stroke="#2b7fcf" stroke-width="1.4"/><rect x="1" y="1" width="15" height="3" fill="#2b7fcf"/><circle cx="12" cy="15" r="5" fill="#4aa0e8" stroke="#fff"/></svg>
<!-- view toolbar icons -->
<svg style="left:356px;top:265px" width="23" height="18" viewBox="0 0 23 18"><path d="M1 8 L21 1 L16 17 L10 11 Z" fill="#eee" stroke="#aaa" stroke-width="1.1"/><path d="M21 1 L10 11 L9 16" stroke="#aaa" fill="none" stroke-width="1"/></svg>
<svg style="left:383px;top:264px" width="22" height="21" viewBox="0 0 22 21"><rect x="1" y="2" width="17" height="16" fill="#fff" stroke="#3a8ed6" stroke-width="1.2"/><rect x="1" y="1" width="17" height="3" fill="#3a8ed6"/><path d="M6 17 L9 12 L13 13 L17 9 L20 12 L15 16 L11 15 L9 19 Z" fill="#9aa" stroke="#333" stroke-width="1.1"/></svg>
<svg style="left:410px;top:264px" width="24" height="20" viewBox="0 0 24 20"><rect x="1.5" y="2" width="21" height="16" fill="#fff" stroke="#3a8ed6" stroke-width="1.3"/><rect x="1.5" y="1.5" width="21" height="3" fill="#2b7fcf"/><path d="M19 11 H7 M11 7 L6 11 L11 15" stroke="#2b7fcf" stroke-width="2.4" fill="none"/></svg>
<svg style="left:438px;top:264px" width="24" height="20" viewBox="0 0 24 20"><rect x="1.5" y="2" width="21" height="16" fill="#fff" stroke="#3a8ed6" stroke-width="1.3"/><rect x="1.5" y="1.5" width="21" height="3" fill="#2b7fcf"/><path d="M5 11 H17 M13 7 L18 11 L13 15" stroke="#2b7fcf" stroke-width="2.4" fill="none"/></svg>
<div class="sep" style="left:465px;top:262px;height:25px;background:#c8c8c8"></div>
<svg style="left:471px;top:263px" width="24" height="23" viewBox="0 0 24 23"><rect x="7" y="1" width="16" height="9" fill="#fff" stroke="#3a8ed6" stroke-width="1.2"/><rect x="7" y="1" width="16" height="2.5" fill="#2b7fcf"/><rect x="1" y="11" width="16" height="11" fill="#fff" stroke="#3a8ed6" stroke-width="1.2"/><rect x="1" y="11" width="16" height="2.5" fill="#2b7fcf"/><path d="M19 19 H21 V14 M19.5 15.5 L21 13.5 L22.5 15.5" stroke="#111" stroke-width="1.2" fill="none"/></svg>
<svg style="left:499px;top:263px" width="25" height="25" viewBox="0 0 25 25"><path d="M2 5 L10 1 L21 4 L13 22 Z" fill="#ddd"/><path d="M2 5 L10 1 L21 4 L13 22 Z M2 5 L13 9 L21 4 M13 9 V22" stroke="#444" stroke-width="1.6" fill="none" stroke-linejoin="round"/><path d="M17 21 H24 L20.5 24.5 Z" fill="#111"/></svg>
<svg style="left:526px;top:263px" width="25" height="25" viewBox="0 0 25 25"><path d="M2 6 L8 2 L14 4 L15 11 L9 14 L2 11 Z" fill="#eaf3fb" stroke="#3a8ed6" stroke-width="1.1"/><path d="M9 7 L19 20 M18 8 L11 20" stroke="#333" stroke-width="1.2"/><circle cx="10" cy="21" r="2" fill="none" stroke="#333"/><path d="M17 20 H24 L20.5 24 Z" fill="#111"/></svg>
<svg style="left:553px;top:263px" width="25" height="25" viewBox="0 0 25 25"><path d="M2 6 L8 2 L14 4 L15 11 L9 14 L2 11 Z" fill="#eaf3fb" stroke="#3a8ed6" stroke-width="1.1"/><rect x="8" y="9" width="15" height="14" fill="#fff" stroke="#333" stroke-dasharray="1.5 1.5"/></svg>

<div class="a" style="left:1px;top:289px;width:1876px;height:603px;background:#000"></div>
<svg style="left:1px;top:289px;overflow:hidden" width="1876" height="603" viewBox="1 289 1876 603">
<path d="M454.3 302 V881" stroke="#60b860" stroke-width="1.35" stroke-dasharray="7 3.2 2 3.4"/>
<path d="M588.6 302 V881" stroke="#60b860" stroke-width="1.35" stroke-dasharray="7 3.2 2 3.4"/>
<path d="M722.8 302 V881" stroke="#60b860" stroke-width="1.35" stroke-dasharray="7 3.2 2 3.4"/>
<path d="M857.3 302 V881" stroke="#60b860" stroke-width="1.35" stroke-dasharray="7 3.2 2 3.4"/>
<path d="M416 338.6 H863" stroke="#60b860" stroke-width="1.35" stroke-dasharray="7 3.2 2 3.4"/>
<path d="M416 473.2 H863" stroke="#60b860" stroke-width="1.35" stroke-dasharray="7 3.2 2 3.4"/>
<path d="M416 607.6 H863" stroke="#60b860" stroke-width="1.35" stroke-dasharray="7 3.2 2 3.4"/>
<path d="M416 741.9 H863" stroke="#60b860" stroke-width="1.35" stroke-dasharray="7 3.2 2 3.4"/>
<path d="M416 875.8 H863" stroke="#60b860" stroke-width="1.35" stroke-dasharray="7 3.2 2 3.4"/>
<circle cx="454.3" cy="293" r="8.3" fill="none" stroke="#60b860" stroke-width="1.2"/>
<text x="451.3" y="297" font-family="Liberation Sans" font-size="7" fill="#4a8a4a">A</text>
<circle cx="588.6" cy="293" r="8.3" fill="none" stroke="#60b860" stroke-width="1.2"/>
<text x="585.6" y="297" font-family="Liberation Sans" font-size="7" fill="#4a8a4a">B</text>
<circle cx="722.8" cy="293" r="8.3" fill="none" stroke="#60b860" stroke-width="1.2"/>
<text x="719.8" y="297" font-family="Liberation Sans" font-size="7" fill="#4a8a4a">C</text>
<circle cx="857.3" cy="293" r="8.3" fill="none" stroke="#60b860" stroke-width="1.2"/>
<text x="854.3" y="297" font-family="Liberation Sans" font-size="7" fill="#4a8a4a">D</text>
<circle cx="407.3" cy="338.6" r="8.3" fill="none" stroke="#60b860" stroke-width="1.2"/>
<text x="405.3" y="341.1" font-family="Liberation Sans" font-size="7" fill="#4a8a4a">5</text>
<circle cx="407.3" cy="473.2" r="8.3" fill="none" stroke="#60b860" stroke-width="1.2"/>
<text x="405.3" y="475.7" font-family="Liberation Sans" font-size="7" fill="#4a8a4a">4</text>
<circle cx="407.3" cy="607.6" r="8.3" fill="none" stroke="#60b860" stroke-width="1.2"/>
<text x="405.3" y="610.1" font-family="Liberation Sans" font-size="7" fill="#4a8a4a">3</text>
<circle cx="407.3" cy="741.9" r="8.3" fill="none" stroke="#60b860" stroke-width="1.2"/>
<text x="405.3" y="744.4" font-family="Liberation Sans" font-size="7" fill="#4a8a4a">2</text>
<circle cx="407.3" cy="875.8" r="8.3" fill="none" stroke="#60b860" stroke-width="1.2"/>
<text x="405.3" y="878.3" font-family="Liberation Sans" font-size="7" fill="#4a8a4a">1</text>
<path d="M1055.2 305.5 V881" stroke="#dc34ea" stroke-width="3" stroke-dasharray="2.5 3.1 7 3"/>
<path d="M1189.5 305.5 V881" stroke="#dc34ea" stroke-width="3" stroke-dasharray="2.5 3.1 7 3"/>
<path d="M1323.6 305.5 V881" stroke="#dc34ea" stroke-width="3" stroke-dasharray="2.5 3.1 7 3"/>
<path d="M1458.1 305.5 V881" stroke="#dc34ea" stroke-width="3" stroke-dasharray="2.5 3.1 7 3"/>
<path d="M1021 339.0 H1463" stroke="#dc34ea" stroke-width="3" stroke-dasharray="2.5 3.1 7 3"/>
<path d="M1021 473.2 H1463" stroke="#dc34ea" stroke-width="3" stroke-dasharray="2.5 3.1 7 3"/>
<path d="M1021 607.6 H1463" stroke="#dc34ea" stroke-width="3" stroke-dasharray="2.5 3.1 7 3"/>
<path d="M1021 742.0 H1463" stroke="#dc34ea" stroke-width="3" stroke-dasharray="2.5 3.1 7 3"/>
<path d="M1021 876.1 H1463" stroke="#dc34ea" stroke-width="3" stroke-dasharray="2.5 3.1 7 3"/>
<circle cx="1055.2" cy="292.8" r="7.85" fill="none" stroke="#dc34ea" stroke-width="3.6"/>
<text x="1053.2" y="295.5" font-family="Liberation Sans" font-size="7" fill="#6a4070">A</text>
<circle cx="1189.5" cy="292.8" r="7.85" fill="none" stroke="#dc34ea" stroke-width="3.6"/>
<text x="1187.5" y="295.5" font-family="Liberation Sans" font-size="7" fill="#6a4070">B</text>
<circle cx="1323.6" cy="292.8" r="7.85" fill="none" stroke="#dc34ea" stroke-width="3.6"/>
<text x="1321.6" y="295.5" font-family="Liberation Sans" font-size="7" fill="#6a4070">C</text>
<circle cx="1458.1" cy="292.8" r="7.85" fill="none" stroke="#dc34ea" stroke-width="3.6"/>
<text x="1456.1" y="295.5" font-family="Liberation Sans" font-size="7" fill="#6a4070">D</text>
<circle cx="1008.6" cy="339.0" r="7.85" fill="none" stroke="#dc34ea" stroke-width="3.6"/>
<text x="1006.6" y="341.5" font-family="Liberation Sans" font-size="7" fill="#6a4070">5</text>
<circle cx="1008.6" cy="473.2" r="7.85" fill="none" stroke="#dc34ea" stroke-width="3.6"/>
<text x="1006.6" y="475.7" font-family="Liberation Sans" font-size="7" fill="#6a4070">4</text>
<circle cx="1008.6" cy="607.6" r="7.85" fill="none" stroke="#dc34ea" stroke-width="3.6"/>
<text x="1006.6" y="610.1" font-family="Liberation Sans" font-size="7" fill="#6a4070">3</text>
<circle cx="1008.6" cy="742.0" r="7.85" fill="none" stroke="#dc34ea" stroke-width="3.6"/>
<text x="1006.6" y="744.5" font-family="Liberation Sans" font-size="7" fill="#6a4070">2</text>
<circle cx="1008.6" cy="876.1" r="7.85" fill="none" stroke="#dc34ea" stroke-width="3.6"/>
<text x="1006.6" y="878.6" font-family="Liberation Sans" font-size="7" fill="#6a4070">1</text>
<path d="M454.3 808.4 L476 835.2 L465.7 835.2 L465.7 859.7 L443.2 859.7 L443.2 835.2 L432.5 835.2 Z" fill="#3a3a3a" stroke="#888" stroke-width="1"/>
<path d="M447.5 832 L454.3 842 L461 832 M454.3 842 V850" stroke="#999" stroke-width="2" fill="none"/>
<path d="M454.3 859.7 V866" stroke="#5cbf5c" stroke-width="1.5"/>
<circle cx="454.3" cy="875.9" r="10.4" fill="#3a3a3a" stroke="#888" stroke-width="1"/>
<path d="M454.3 871 L458 875.9 L454.3 880.8 L450.6 875.9 Z" fill="#aaa"/>
<path d="M471 865.5 H495.3 V854.6 L521.1 875.9 L495.3 897 V886.9 H471 Z" fill="#3a3a3a" stroke="#888" stroke-width="1"/>
<path d="M481 868 L499 884 M499 868 L481 884" stroke="#999" stroke-width="2"/>
<path d="M416 875.8 H863" stroke="#5cbf5c" stroke-width="1.2" stroke-dasharray="7 3.2 2 3.4" opacity="0.8"/>
</svg>

<!-- COORD BAR -->
<div class="a" style="left:1px;top:892px;width:1877px;height:44px;background:#d6d6d6"></div>
<div class="a" style="left:1px;top:892px;width:510px;height:42px;background:#f0f0f0;border-top:2px solid #fafafa;box-sizing:border-box"></div>
<svg style="left:3px;top:899px" width="3" height="27" viewBox="0 0 3 27"><path d="M1.5 0 V27" stroke="#8a8a8a" stroke-width="2" stroke-dasharray="2 2"/></svg>
<div class="t" style="left:11.5px;top:903px;font-size:19px;font-weight:bold;color:#111">X</div>
<div class="a" style="left:31px;top:901px;width:136px;height:22px;background:#fff;border:1px solid #b4b4b4"></div>
<div class="t" style="left:39px;top:905.5px;color:#777;font-size:14px">14360.6</div>
<div class="sep" style="left:172px;top:894px;height:38px;background:#d9d9d9"></div>
<div class="t" style="left:181px;top:903px;font-size:19px;font-weight:bold;color:#111">Y</div>
<div class="a" style="left:201px;top:901px;width:136px;height:22px;background:#fff;border:1px solid #b4b4b4"></div>
<div class="t" style="left:208.5px;top:905.5px;color:#777;font-size:14px">26273.9</div>
<div class="sep" style="left:342px;top:894px;height:38px;background:#d9d9d9"></div>
<div class="t" style="left:350px;top:903px;font-size:19px;font-weight:bold;color:#111">Z</div>
<div class="a" style="left:370.5px;top:901px;width:135px;height:22px;background:#fff;border:1px solid #b4b4b4"></div>
<div class="t" style="left:378px;top:905.5px;color:#777;font-size:14px">0.0</div>


<!-- STATUS TOOLBAR -->
<div class="a" style="left:1px;top:934px;width:1877px;height:35px;background:#d6d6d6"></div>
<div class="a" style="left:1px;top:934px;width:510px;height:2px;background:#e2e2e2"></div>
<div class="a" style="left:1px;top:936px;width:1666px;height:30px;background:#f0f0f0"></div>
<div class="a" style="left:1px;top:934px;width:157px;height:34px;background:#f3f3f3"></div>
<div class="a" style="left:158px;top:934px;width:2px;height:34px;background:#dcdcdc"></div>
<svg style="left:3px;top:940px" width="3" height="23" viewBox="0 0 3 23"><path d="M1.5 0 V23" stroke="#8a8a8a" stroke-width="2" stroke-dasharray="2 2"/></svg>
<div class="a" style="left:9px;top:937px;width:110px;height:28px;background:#6fa3dc;border:1px solid #2f6fb8;box-sizing:border-box"></div>
<div class="a" style="left:36px;top:937px;width:1.5px;height:28px;background:#2f6fb8"></div>
<div class="a" style="left:63.5px;top:937px;width:1.5px;height:28px;background:#2f6fb8"></div>
<div class="a" style="left:91px;top:937px;width:1.5px;height:28px;background:#2f6fb8"></div>
<svg style="left:11px;top:938px" width="24" height="26" viewBox="0 0 24 26"><path d="M2 24 L10 16 M2 16 L10 24" stroke="#f0c45a" stroke-width="2"/><path d="M13 8 L21 4 L22 8 L18 10 L19 14 L22 13 L22 16 L14 20 L13 16 L16 15 L15 11 L13 12 Z" fill="#e6f3fc" stroke="#fff" stroke-width="0.6"/><path d="M8 18 L14 13" stroke="#fff" stroke-width="1"/></svg>
<svg style="left:38px;top:938px" width="24" height="26" viewBox="0 0 24 26"><path d="M2 24 L10 16 M2 16 L10 24" stroke="#d8dde6" stroke-width="2"/><path d="M10 6 L17 2 L22 5 L15 9 Z" fill="#e8e8e8"/><rect x="12" y="8" width="8" height="5" fill="#ddd"/><circle cx="16" cy="19" r="5" fill="none" stroke="#9db8d8" stroke-width="1.2"/></svg>
<svg style="left:66px;top:938px" width="24" height="26" viewBox="0 0 24 26"><rect x="1" y="1" width="22" height="10" rx="3" fill="#fff" stroke="#333" stroke-width="1.2"/><circle cx="6.5" cy="6" r="1.5" fill="#333"/><circle cx="12" cy="6" r="1.5" fill="#333"/><circle cx="17.5" cy="6" r="1.5" fill="#333"/><path d="M7 15 L17 24 M17 15 L7 24" stroke="#f0c45a" stroke-width="2"/></svg>
<svg style="left:93px;top:940px" width="24" height="22" viewBox="0 0 24 22"><rect x="1" y="3" width="22" height="15" fill="#fff" stroke="#333" stroke-width="0.8"/><rect x="1" y="3" width="22" height="2" fill="#333"/><rect x="1" y="16" width="22" height="2" fill="#333"/><path d="M2 10.5 H22" stroke="#d9322e" stroke-dasharray="2 1.5"/><path d="M7 5 L17 16 M17 5 L7 16" stroke="#f0b040" stroke-width="2.2"/></svg>
<svg style="left:120px;top:939px" width="25" height="25" viewBox="0 0 25 25"><path d="M1 6 V1 H6 M14 1 H19 V6 M1 11 V16 H4" stroke="#333" stroke-width="1.1" fill="none"/><path d="M7 3 H13 M10 3 V14 M7 14 H13" stroke="#2b8fe0" stroke-width="2.2"/><rect x="12" y="13" width="11" height="11" fill="#fff" stroke="#111" stroke-width="1.2" stroke-dasharray="2 1"/><path d="M13 23 L22 14 M13 19 L18 14 M16 23 L22 17" stroke="#777" stroke-width="0.8"/></svg>
<svg style="left:162px;top:940px" width="3" height="23" viewBox="0 0 3 23"><path d="M1.5 0 V23" stroke="#8a8a8a" stroke-width="2" stroke-dasharray="2 2"/></svg>
<svg style="left:170px;top:940px" width="24" height="23" viewBox="0 0 24 23"><ellipse cx="10" cy="16" rx="9" ry="5" fill="#4a72b8"/><ellipse cx="10" cy="12" rx="9" ry="5" fill="#6f98d8"/><ellipse cx="10" cy="8" rx="9" ry="5" fill="#4a72b8"/><ellipse cx="10" cy="6" rx="9" ry="4.5" fill="#a9c4ec"/><rect x="13" y="11" width="10" height="11" fill="#f3e48a" stroke="#8a7d2a" stroke-width="0.8"/><path d="M15 14 H21 M15 17 H21 M15 20 H21" stroke="#5a8a3a" stroke-width="1"/></svg>
<div class="a" style="left:198.5px;top:938px;width:1px;height:27px;background:#c8c8c8"></div>
<div class="a" style="left:202.5px;top:939.5px;width:584px;height:23px;background:#e3e3e3;border:1px solid #c4c4c4"></div>
<svg style="left:206px;top:942px" width="20" height="20" viewBox="0 0 20 20"><rect x="1" y="1" width="18" height="18" fill="#fff" stroke="#555" stroke-width="1.2"/><path d="M1 6 H19 M6 6 V19 M6 12 H12 V19 M12 6 V12 H19" stroke="#555" stroke-width="1.1" fill="none"/></svg>
<div class="t" style="left:234.5px;top:944.5px;color:#222;font-size:14.62px">None</div>
<div class="arrb" style="left:772.5px;top:948.5px;border-left-width:4.5px;border-right-width:4.5px;border-top-width:5.5px"></div>
<div class="a" style="left:790px;top:940.5px;width:90px;height:21px;background:#fff;border:1.5px solid #8aa4c8"></div>
<div class="t" style="left:797px;top:945px;color:#8a8a8a;font-size:14.5px">0.00°</div>
<div class="a" style="left:885.5px;top:940px;width:20px;height:23px;background:#dedede"></div>
<svg style="left:889px;top:947px" width="12" height="8" viewBox="0 0 12 8"><path d="M1 1 L6 6 L11 1" stroke="#aaa" stroke-width="1.2" fill="none"/></svg>
<svg style="left:909px;top:941px" width="23" height="22" viewBox="0 0 23 22"><rect x="2" y="5" width="19" height="15" fill="#f4f4f4" stroke="#999" stroke-width="1.1"/><rect x="2" y="5" width="19" height="3" fill="#aaa"/><path d="M2 20 L21 8" stroke="#888"/><path d="M4 5 L6 1 M9 5 L11 1 M14 5 L16 1" stroke="#999"/></svg>
<svg style="left:936px;top:941px" width="25" height="22" viewBox="0 0 25 22"><path d="M12 1 L23 11 L12 21 L1 11 Z" fill="none" stroke="#bbb" stroke-dasharray="2 1.5"/><path d="M6 13 L12 7 L18 13 L12 19 Z" fill="#ccc"/></svg>
<div class="arrb" style="left:966.5px;top:950px;border-left-width:4.5px;border-right-width:4.5px;border-top-width:5.5px;border-top-color:#222"></div>
<div class="a" style="left:983.5px;top:938px;width:1px;height:27px;background:#c8c8c8"></div>
<svg style="left:988px;top:940px" width="26" height="25" viewBox="0 0 26 25"><g fill="none" stroke="#3a8ed6" stroke-width="1.1"><circle cx="9" cy="3" r="2"/><circle cx="15" cy="3" r="2"/><circle cx="21" cy="3" r="2"/><circle cx="3" cy="9" r="2"/><circle cx="3" cy="15" r="2"/><circle cx="3" cy="21" r="2"/></g><path d="M9 6 V24 M15 6 V24 M21 6 V24 M6 9 H25 M6 15 H25 M6 21 H25" stroke="#3a8ed6" stroke-width="1.1" stroke-dasharray="1.5 1"/></svg>
<div class="a" style="left:1016.5px;top:938px;width:1px;height:27px;background:#c8c8c8"></div>
<svg style="left:1021px;top:940px" width="26" height="25" viewBox="0 0 26 25"><g fill="none" stroke="#3a8ed6" stroke-width="1.1"><circle cx="9" cy="3" r="2"/><circle cx="15" cy="3" r="2"/><circle cx="21" cy="3" r="2"/><circle cx="3" cy="9" r="2"/><circle cx="3" cy="15" r="2"/><circle cx="3" cy="21" r="2"/></g><path d="M9 6 V24 M15 6 V24 M21 6 V24 M6 9 H25 M6 15 H25 M6 21 H25" stroke="#3a8ed6" stroke-width="1.1" stroke-dasharray="1.5 1"/><rect x="12" y="12" width="12" height="12" fill="#fff" stroke="#111" stroke-width="1.3"/><path d="M14 17 L17 21 L22 13" stroke="#111" stroke-width="2" fill="none"/></svg>
<div class="arrb" style="left:1052.5px;top:950px;border-left-width:4.5px;border-right-width:4.5px;border-top-width:5.5px;border-top-color:#222"></div>
<svg style="left:1067px;top:940px" width="27" height="25" viewBox="0 0 27 25"><g fill="none" stroke="#3a8ed6" stroke-width="1.1"><circle cx="9" cy="3" r="2"/><circle cx="15" cy="3" r="2"/><circle cx="21" cy="3" r="2"/><circle cx="3" cy="9" r="2"/><circle cx="3" cy="15" r="2"/><circle cx="3" cy="21" r="2"/></g><path d="M9 6 V24 M15 6 V24 M6 9 H25 M6 15 H25" stroke="#3a8ed6" stroke-width="1.1" stroke-dasharray="1.5 1"/><path d="M10 20 L17 17 L25 20 L17 24 Z" fill="#9fc8ee" stroke="#3a8ed6"/><path d="M10 16 L17 13 L25 16 L17 20 Z" fill="#cfe6f8" stroke="#3a8ed6"/><path d="M10 12 L17 9 L25 12 L17 16 Z" fill="#e6f3fc" stroke="#3a8ed6"/></svg>
<div class="arrb" style="left:1098px;top:950px;border-left-width:4.5px;border-right-width:4.5px;border-top-width:5.5px;border-top-color:#222"></div>
<div class="a" style="left:1114px;top:934px;width:2px;height:34px;background:#dcdcdc"></div>
<svg style="left:1118px;top:940px" width="3" height="23" viewBox="0 0 3 23"><path d="M1.5 0 V23" stroke="#8a8a8a" stroke-width="2" stroke-dasharray="2 2"/></svg>
<svg style="left:1127px;top:940px" width="32" height="29" viewBox="0 0 32 29"><circle cx="16" cy="14.5" r="15" fill="#5cb83a"/><circle cx="16" cy="13" r="13" fill="#7fd04e"/><path d="M6 14.5 L15 6 V11 H25 V18 H15 V23 Z" fill="#fff"/></svg>
<div class="arrb" style="left:1165.5px;top:952px;border-left-width:4.5px;border-right-width:4.5px;border-top-width:5.5px;border-top-color:#222"></div>
<svg style="left:1181px;top:940px" width="32" height="29" viewBox="0 0 32 29"><circle cx="16" cy="14.5" r="15" fill="#c6c6c6"/><path d="M26 14.5 L17 6 V11 H7 V18 H17 V23 Z" fill="#f2f2f2"/></svg>
<div class="arrb" style="left:1219px;top:952px;border-left-width:4.5px;border-right-width:4.5px;border-top-width:5.5px;border-top-color:#222"></div>
<svg style="left:1234px;top:940px" width="34" height="29" viewBox="0 0 34 29"><ellipse cx="17" cy="20" rx="16" ry="8" fill="#9a9a9a"/><ellipse cx="17" cy="18" rx="16" ry="8" fill="#c8c8c8"/><ellipse cx="17" cy="17" rx="11" ry="5" fill="#b0b0b0"/><path d="M3 3 L17 17" stroke="#888" stroke-width="3"/></svg>
<div class="arrb" style="left:1272.5px;top:952px;border-left-width:4.5px;border-right-width:4.5px;border-top-width:5.5px;border-top-color:#222"></div>
<div class="a" style="left:1287.5px;top:939.5px;width:193px;height:25px;background:#e3e3e3;border:1px solid #c4c4c4"></div>
<svg style="left:1290px;top:941px" width="24" height="22" viewBox="0 0 24 22"><rect x="1" y="1" width="15" height="12" fill="#fff" stroke="#2b7fcf" stroke-width="1.3"/><rect x="1" y="1" width="15" height="2.5" fill="#2b7fcf"/><rect x="7" y="8" width="16" height="13" fill="#fff" stroke="#2b7fcf" stroke-width="1.3"/><rect x="7" y="8" width="16" height="2.5" fill="#2b7fcf"/></svg>
<div class="t" style="left:1320px;top:944.5px;color:#222;width:141px;overflow:hidden;font-size:14.8px">TempModel Temp View</div>
<div class="arrb" style="left:1466px;top:949px;border-left-width:4.5px;border-right-width:4.5px;border-top-width:5.5px"></div>
<div class="a" style="left:1485px;top:938px;width:1px;height:27px;background:#c8c8c8"></div>
<svg style="left:1490px;top:941px" width="26" height="22" viewBox="0 0 26 22"><rect x="1" y="1" width="16" height="12" fill="#fff" stroke="#2b7fcf" stroke-width="1.3"/><rect x="1" y="1" width="16" height="2.5" fill="#2b7fcf"/><rect x="8" y="8" width="17" height="13" fill="#fff" stroke="#2b7fcf" stroke-width="1.3"/><rect x="8" y="8" width="17" height="2.5" fill="#2b7fcf"/></svg>
<div class="a" style="left:1519px;top:938px;width:1px;height:27px;background:#c8c8c8"></div>
<div class="a" style="left:1522.5px;top:940px;width:18.5px;height:24px;background:#9fc8ee;border:1px solid #3a80c8;box-sizing:border-box"></div>
<div class="t" style="left:1527px;top:946px;color:#222;font-size:15px">1</div>
<div class="a" style="left:1541px;top:940px;width:1.4px;height:25px;background:#333"></div>
<div class="a" style="left:1542px;top:964px;width:124px;height:1px;background:#cfcfcf"></div>
<div class="a" style="left:1561.5px;top:940px;width:1.4px;height:25px;background:#333"></div>
<div class="t" style="left:1547px;top:946px;color:#222;font-size:15px">2</div>
<div class="a" style="left:1582px;top:940px;width:1.4px;height:25px;background:#333"></div>
<div class="t" style="left:1567.5px;top:946px;color:#222;font-size:15px">3</div>
<div class="a" style="left:1602.5px;top:940px;width:1.4px;height:25px;background:#333"></div>
<div class="t" style="left:1588px;top:946px;color:#222;font-size:15px">4</div>
<div class="a" style="left:1623.5px;top:940px;width:1.4px;height:25px;background:#333"></div>
<div class="t" style="left:1608.5px;top:946px;color:#222;font-size:15px">5</div>
<div class="a" style="left:1644px;top:940px;width:1.4px;height:25px;background:#333"></div>
<div class="t" style="left:1629px;top:946px;color:#222;font-size:15px">6</div>
<div class="a" style="left:1665px;top:940px;width:1.4px;height:25px;background:#333"></div>
<div class="t" style="left:1650px;top:946px;color:#222;font-size:15px">7</div>


<!-- STATUS BAR -->
<div class="a" style="left:1px;top:968px;width:1877px;height:37px;background:#f0f0f0;border-top:1px solid #e2e2e2"></div>
<div class="t" style="left:4.5px;top:981px;color:#222;font-size:15.1px">Element Selection &gt; Identify element to add to set</div>
<svg style="left:382px;top:975px" width="3" height="28" viewBox="0 0 3 28"><path d="M1.5 0 V28" stroke="#8a8a8a" stroke-width="2" stroke-dasharray="2 2"/></svg>
<svg style="left:396px;top:975px" width="24" height="26" viewBox="0 0 24 26"><path d="M12 1 Q23 1 23 11 Q23 20 14 21 L12 25 L10 21 Q1 20 1 11 Q1 1 12 1 Z" fill="#e6f0fb" stroke="#8ab0da"/><circle cx="12" cy="11" r="8.5" fill="#2b6fd0"/><circle cx="12" cy="6.5" r="1.6" fill="#fff"/><rect x="10.5" y="9" width="3" height="8" fill="#fff"/></svg>
<div class="sep" style="left:425px;top:970px;height:35px;background:#a9a9a9"></div>
<div class="sep" style="left:831.5px;top:970px;height:35px;background:#a9a9a9"></div>
<svg style="left:837px;top:972px" width="31" height="31" viewBox="0 0 31 31"><path d="M4 27 L12 23 L21 16 L27 5" stroke="#2b8fd0" stroke-width="2" fill="none"/><circle cx="4" cy="27" r="3" fill="#fff" stroke="#2b8fd0" stroke-width="2"/><circle cx="21" cy="16" r="3" fill="#fff" stroke="#2b8fd0" stroke-width="2"/><circle cx="27" cy="5" r="3" fill="#fff" stroke="#2b8fd0" stroke-width="2"/></svg>
<div class="sep" style="left:870px;top:970px;height:35px;background:#a9a9a9"></div>
<svg style="left:880px;top:977px" width="21" height="20" viewBox="0 0 21 20"><path d="M5 9 V6 Q5 1.5 10.5 1.5 Q16 1.5 16 6 V9" stroke="#333" stroke-width="2" fill="none"/><rect x="1" y="9" width="19" height="10" fill="#c9c62a"/><rect x="1" y="9" width="19" height="3" fill="#e6e05a"/></svg>
<div class="sep" style="left:908.5px;top:970px;height:35px;background:#a9a9a9"></div>
<div class="t" style="left:914.5px;top:981px;color:#222;font-size:14.88px">Default ((none))</div>
<div class="sep" style="left:1080px;top:970px;height:35px;background:#a9a9a9"></div>
<svg style="left:1094px;top:975px" width="17" height="25" viewBox="0 0 17 25"><path d="M1 1 V20 L5.5 16 L9 24 L12 23 L8.5 15 L15 15 Z" fill="#111"/></svg>
<div class="t" style="left:1123.5px;top:981px;color:#222">: 1</div>
<div class="sep" style="left:1232.5px;top:970px;height:35px;background:#a9a9a9"></div>
<div class="t" style="left:1236.5px;top:981px;color:#222;font-size:13.88px">14126.8, 26332.4, 0.0</div>
<div class="sep" style="left:1482px;top:970px;height:35px;background:#a9a9a9"></div>
<div class="sep" style="left:1521.5px;top:970px;height:35px;background:#a9a9a9"></div>
<div class="sep" style="left:1561px;top:970px;height:35px;background:#a9a9a9"></div>
<svg style="left:1570px;top:977px" width="24" height="24" viewBox="0 0 24 24"><path d="M1 1 H20 L23 4 V23 H1 Z" fill="#222"/><rect x="5" y="2" width="13" height="7" fill="#fff"/><rect x="5" y="14" width="14" height="9" fill="#ddd"/><rect x="7" y="16" width="3" height="5" fill="#222"/></svg>
<div class="sep" style="left:1600px;top:970px;height:35px;background:#a9a9a9"></div>
<svg style="left:1609px;top:976px" width="25" height="25" viewBox="0 0 25 25"><path d="M5 3 H20 Q23 3 23 6 V18 Q23 22 19 22 H6 Q2 22 2 18 V6 Q2 3 5 3 Z" fill="none" stroke="#bbb" stroke-width="1.4"/><path d="M6 8 Q10 12 6 16 M19 8 Q15 12 19 16" stroke="#bbb" stroke-width="1.2" fill="none"/></svg>
<div class="sep" style="left:1639px;top:970px;height:35px;background:#a9a9a9"></div>
<div class="sep" style="left:1679px;top:970px;height:35px;background:#a9a9a9"></div>
<div class="sep" style="left:1718px;top:970px;height:35px;background:#a9a9a9"></div>
<svg style="left:1728px;top:975px" width="23" height="26" viewBox="0 0 23 26"><rect x="3" y="1" width="18" height="24" rx="1" fill="#1f85d8"/><path d="M1 5 H5 M1 9 H5 M1 13 H5 M1 17 H5 M1 21 H5" stroke="#1f5fa0" stroke-width="1.5"/><rect x="16" y="3" width="3" height="20" fill="#4aa8f0"/></svg>
<div class="sep" style="left:1757px;top:970px;height:35px;background:#a9a9a9"></div>
<div class="sep" style="left:1796.5px;top:970px;height:35px;background:#a9a9a9"></div>
<svg style="left:1806px;top:977px" width="22" height="22" viewBox="0 0 22 22"><path d="M2 4 L18 1 L21 4 V17 L5 21 L2 18 Z" fill="none" stroke="#c4c4c4" stroke-width="1.2"/><path d="M5 7 L15 5 V15 L5 17 Z" fill="none" stroke="#c4c4c4"/></svg>
<div class="sep" style="left:1835.5px;top:970px;height:35px;background:#a9a9a9"></div>
<svg style="left:1844px;top:975px" width="27" height="27" viewBox="0 0 27 27"><circle cx="11" cy="11" r="9.5" fill="#e6f3fc" stroke="#2b8fd0" stroke-width="1.5"/><path d="M1.5 11 H20.5 M11 1.5 V20.5 M3 6 H19 M3 16 H19" stroke="#2b8fd0" stroke-width="1.1"/><ellipse cx="11" cy="11" rx="4.5" ry="9.5" fill="none" stroke="#2b8fd0" stroke-width="1.1"/><path d="M15 15 L25 25 M25 15 L15 25" stroke="#d9221e" stroke-width="3"/></svg>


<!-- DIALOGS -->
<!-- ===== Element Selection dialog ===== -->
<div class="a" style="left:18px;top:235px;width:335px;height:150px;background:#f0f0f0;border:1px solid #cfcfcf;box-shadow:0 0 3px rgba(0,0,0,0.15)"></div>
<div class="a" style="left:19px;top:236px;width:335px;height:35px;background:#fdfdfd"></div>
<svg style="left:24px;top:240px" width="26" height="26" viewBox="24 240 26 26"><path d="M29 260.5 L36.5 251.5" stroke="#555" stroke-width="5" stroke-linecap="round"/><path d="M29 260.5 L36.5 251.5" stroke="#c8cccf" stroke-width="2.4" stroke-linecap="round"/><path d="M35.5 252.5 Q34 247 37.5 244 Q41 241.5 45 243.5 L42 246.5 L43.5 249 L46.8 248 Q47 251.5 43.5 253 Q40 254.5 37.5 252.5 Z" fill="#cfd2d4" stroke="#444" stroke-width="1.4" stroke-linejoin="round"/><circle cx="41.7" cy="257.3" r="4.6" fill="#e6e6e6" stroke="#777" stroke-width="1.6" stroke-dasharray="2 1"/><circle cx="41.7" cy="257.3" r="1.6" fill="none" stroke="#888" stroke-width="1"/></svg>
<div class="t" style="left:52.5px;top:246.5px;color:#9a9a9a;font-size:14.66px">Element Selection</div>
<div class="a" style="left:204px;top:252px;width:11px;height:1px;background:#777"></div>
<div class="a" style="left:260px;top:247px;width:11px;height:11px;border:1px solid #e2e2e2"></div>
<svg style="left:317px;top:246px" width="14" height="14" viewBox="0 0 14 14"><path d="M1 1 L13 13 M13 1 L1 13" stroke="#777" stroke-width="1.1"/></svg>
<!-- toolbar 1 -->
<div class="a" style="left:33px;top:287px;width:145px;height:32px;border:1px solid #fafafa;border-top-color:#a8a8a8;border-left-color:#a8a8a8;background:#efefef"></div>
<div class="a" style="left:36px;top:290px;width:27px;height:27px;background:#7aa9dc;border:1px solid #4a88c9;box-sizing:border-box"></div>
<svg style="left:38px;top:292px" width="24" height="24" viewBox="0 0 24 24"><circle cx="12" cy="12" r="6" fill="none" stroke="#e8f2fb" stroke-width="1.3"/><circle cx="12" cy="12" r="4.8" fill="none" stroke="#3a6f9f" stroke-width="0.8"/><path d="M12 2 V22 M2 12 H22" stroke="#e8f2fb" stroke-width="1.2"/></svg>
<div class="a" style="left:67.5px;top:296px;width:21px;height:13px;border:1.4px dashed #5a7f99;box-sizing:border-box"></div>
<svg style="left:95px;top:295px" width="23" height="16" viewBox="0 0 23 16"><path d="M5 1.5 H21.5 L17 14.5 H1 Z" fill="none" stroke="#5a7f99" stroke-width="1.4" stroke-dasharray="3 2"/></svg>
<svg style="left:124px;top:292px" width="23" height="23" viewBox="0 0 23 23"><circle cx="11.5" cy="11.5" r="10" fill="none" stroke="#5a7f99" stroke-width="1.4" stroke-dasharray="3 2.3"/></svg>
<svg style="left:152px;top:292px" width="23" height="23" viewBox="0 0 23 23"><path d="M1 22 L22 1" stroke="#3a8ed6" stroke-width="1.5" stroke-dasharray="4 2.5"/></svg>
<svg style="left:208px;top:290px" width="29" height="28" viewBox="0 0 29 28"><defs><linearGradient id="sqg" x1="0" y1="0" x2="1" y2="1"><stop offset="0" stop-color="#7fc0f0"/><stop offset="1" stop-color="#1f5fa0"/></linearGradient></defs><rect x="1" y="1" width="18" height="19" fill="url(#sqg)" stroke="#000" stroke-width="2"/><circle cx="21" cy="20" r="6" fill="#fff" stroke="#c62828" stroke-width="2.2"/><path d="M17 16 L25 24" stroke="#c62828" stroke-width="2.2"/></svg>
<!-- toolbar 2 -->
<div class="a" style="left:33px;top:339px;width:145px;height:32px;border:1px solid #fafafa;border-top-color:#a8a8a8;border-left-color:#a8a8a8;background:#efefef"></div>
<div class="a" style="left:36px;top:342px;width:27px;height:27px;background:#7aa9dc;border:1px solid #4a88c9;box-sizing:border-box"></div>
<svg style="left:38px;top:343px" width="24" height="26" viewBox="0 0 24 26"><path d="M10 2 V14 M4 8 H16 M6 4 L14 12 M14 4 L6 12" stroke="#fff" stroke-width="1.1"/><path d="M11 10 L11 23 L14 20 L17 25 L19 24 L16.5 19 L21 19 Z" fill="#111" stroke="#fff" stroke-width="0.8"/></svg>
<svg style="left:67px;top:345px" width="22" height="22" viewBox="0 0 22 22"><path d="M11 2.5 V19.5 M2.5 11 H19.5" stroke="#1f85d8" stroke-width="5" stroke-linecap="round"/></svg>
<div class="a" style="left:96px;top:353px;width:21px;height:4.5px;border-radius:2px;background:#1f85d8"></div>
<svg style="left:124px;top:344px" width="23" height="23" viewBox="0 0 23 23"><rect x="1" y="1" width="21" height="21" rx="2" fill="#fff" stroke="#1f85d8" stroke-width="1.8"/><path d="M22 1 V20 Q22 22 20 22 H1 Z" fill="#1f85d8"/></svg>
<svg style="left:152px;top:343px" width="24" height="24" viewBox="0 0 24 24"><circle cx="12" cy="12" r="10.5" fill="#fff" stroke="#999" stroke-width="1.3" stroke-dasharray="3 2.3"/></svg>
<svg style="left:208px;top:341px" width="29" height="30" viewBox="0 0 29 30"><rect x="1" y="1" width="18" height="19" fill="url(#sqg)" stroke="#000" stroke-width="2"/><path d="M17 13 L17 28 L20.5 24.5 L23.5 30 L26 29 L23.5 23.5 L28 23.5 Z" fill="#111" stroke="#fff" stroke-width="0.8"/></svg>
<div class="arrb" style="left:327.5px;top:362px;border-left-width:5px;border-right-width:5px;border-top-width:6px"></div>

<!-- ===== Grid Systems Orientation dialog ===== -->
<div class="a" style="left:424px;top:350px;width:517px;height:37px;background:#0f78d6"></div>
<div class="a" style="left:424px;top:387px;width:517px;height:38px;background:#fbfbfb"></div>
<svg style="left:433px;top:359px" width="19" height="19" viewBox="0 0 19 19"><rect x="0" y="0" width="19" height="19" rx="3" fill="#104a86"/><path d="M5 6 L11 3.5 L14 4.5 V15 L11 16 L5 14 Z" fill="#e8eef6"/><path d="M6 8 H10 M6 10 H10 M6 12 H10" stroke="#7d9cc4" stroke-width="0.9"/></svg>
<div class="t" style="left:458px;top:361.5px;color:#fff;overflow:hidden;width:160px;font-size:14.5px">Grid Systems Orientation</div>
<div class="a" style="left:847px;top:362.5px;width:11px;height:11px;border:1px solid #5a9fe0"></div>
<svg style="left:904px;top:362px" width="13" height="13" viewBox="0 0 13 13"><path d="M0.5 0.5 L12.5 12.5 M12.5 0.5 L0.5 12.5" stroke="#fff" stroke-width="1.3"/></svg>
<!-- combobox -->
<div class="a" style="left:426px;top:392px;width:190px;height:26px;background:#fff;border:1px solid #1a6fc0"></div>
<div class="a" style="left:428.5px;top:395.5px;width:110.5px;height:19px;background:#0f78d6"></div>
<div class="t" style="left:428.5px;top:398px;color:#fff;font-size:15.09px">OrthogonalGrid1</div>
<div class="a" style="left:604.5px;top:393px;width:12px;height:25px;background:#c3dcf3;border-left:1px solid #7fb0e0"></div>
<div class="arrb" style="left:607px;top:404px;border-left-width:3.5px;border-right-width:3.5px;border-top-width:4px;border-top-color:#222"></div>
<div class="a" style="left:620.5px;top:390px;width:1px;height:33px;background:#dcdcdc"></div>
<!-- dropdown list -->
<div class="a" style="left:425px;top:419.5px;width:192.5px;height:20.5px;background:#fff"></div>
<div class="t" style="left:428px;top:423.5px;color:#222">OrthogonalGrid</div>
<div class="a" style="left:425px;top:440px;width:192.5px;height:20.5px;background:#0f78d6"></div>
<div class="t" style="left:428px;top:443px;color:#fff;font-size:15.09px">OrthogonalGrid1</div>
<svg style="left:610px;top:446px" width="10" height="16" viewBox="0 0 10 16"><path d="M1 1 V13 L4 10 L6 15 L8 14 L6 9.5 L9.5 9.5 Z" fill="#fff" stroke="#333" stroke-width="0.8"/></svg>
<!-- move / rotate / finish / cancel -->
<svg style="left:630px;top:392px" width="32" height="28" viewBox="0 0 32 28"><rect x="13.5" y="1.5" width="17" height="10" fill="#fff" stroke="#5aa0c8" stroke-width="1.3"/><rect x="1" y="16.5" width="16" height="10" fill="none" stroke="#555" stroke-width="1.1" stroke-dasharray="2.2 1.6"/><path d="M18 21 H22 V14 M20 16 L22 13.5 L24 16" stroke="#222" stroke-width="1.2" fill="none"/></svg>
<div class="t" style="left:665px;top:399px;color:#222;font-size:14.68px">Move</div>
<svg style="left:712px;top:390px" width="28" height="32" viewBox="0 0 28 32"><path d="M1.5 10 L9.5 1.5 L18 9 L10 17.5 Z" fill="#fff" stroke="#5aa0c8" stroke-width="1.3"/><rect x="8.5" y="20.5" width="17" height="10" fill="none" stroke="#555" stroke-width="1.1" stroke-dasharray="2.2 1.6"/><path d="M15 11 Q21 12 22 18 M15 11 L17 9 M15 11 L17.5 13" stroke="#222" stroke-width="1.2" fill="none"/></svg>
<div class="t" style="left:745.5px;top:399px;color:#222;font-size:14.72px">Rotate</div>
<svg style="left:802px;top:398px" width="17" height="17" viewBox="0 0 17 17"><circle cx="8.5" cy="8.5" r="7.8" fill="#c4c4c4" stroke="#b0b0b0"/><path d="M4.5 8.5 L7.5 11.5 L12.5 5" stroke="#f4f4f4" stroke-width="1.8" fill="none"/></svg>
<div class="t" style="left:822.5px;top:399px;color:#9a9a9a">Finish</div>
<svg style="left:868px;top:398px" width="16" height="16" viewBox="0 0 16 16"><circle cx="8" cy="8" r="7.5" fill="#c8201c"/><path d="M5 5 L11 11 M11 5 L5 11" stroke="#fff" stroke-width="2"/></svg>
<div class="t" style="left:887.5px;top:399px;color:#222;font-size:13.9px">Cancel</div>

<!-- red boxes -->
<svg style="left:0;top:0" width="1880" height="1007" viewBox="0 0 1880 1007">
<rect x="411.5" y="337.6" width="209" height="134.4" fill="none" stroke="#ea4f49" stroke-width="5"/>
<rect x="627.9" y="368.7" width="171.3" height="89.1" fill="none" stroke="#ea4f49" stroke-width="5"/>
<path d="M406.6 415.8 L378.1 393.2 A28.6 28.6 0 1 0 378.1 438.2 Z" fill="#ef4a44"/>
<path d="M807.7 436.4 L844 402 C852 396 866 398 874 410 C884 425 884 452 872 466 C862 477 846 477 836 468 Z" fill="#ef4a44"/>
<path d="M362.3 404.3 H366 V426.9 H362.3 V409.2 Q359.5 411.6 356 412.6 V409 Q360 407.5 362.3 404.3 Z" fill="#fff"/>
<text x="840.5" y="452.8" font-family="Liberation Sans" font-size="42" fill="#fff">2</text>
</svg>

</body></html>
